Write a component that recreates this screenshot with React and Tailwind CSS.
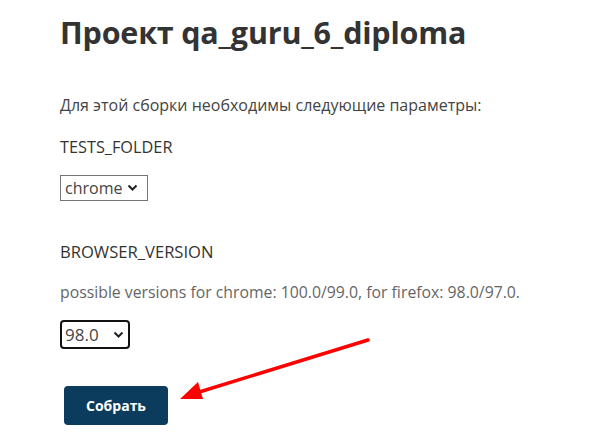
import React from "react";

export default function App() {
  return (
    <div
      className="relative w-[603px] h-[438px] bg-white overflow-hidden text-[#333]"
      style={{ fontFamily: '"Open Sans", "Noto Sans", sans-serif' }}
    >
      <div className="pl-[60px] pt-[12px] flex flex-col items-start">
        <h1 className="text-[30.5px] font-bold leading-[40px] text-[#333] tracking-[-0.2px]">
          Проект qa_guru_6_diploma
        </h1>
        <p className="mt-[42px] text-[16px] leading-[22px] text-[#444]">
          Для этой сборки необходимы следующие параметры:
        </p>
        <div className="mt-[20px] text-[16.3px] leading-[22px] text-[#333]">TESTS_FOLDER</div>
        <div className="mt-[17px] h-[26px] w-[88px] border border-[#767676] flex items-center pl-[4px] text-[16px] text-[#444]">
          <span>chrome</span>
          <svg className="ml-[5px]" width="11" height="8" viewBox="0 0 11 8">
            <path d="M1.5 1.5 L5.5 5.5 L9.5 1.5" stroke="#222" strokeWidth="2" fill="none" />
          </svg>
        </div>
        <div className="mt-[40px] text-[16.6px] leading-[22px] text-[#333]">BROWSER_VERSION</div>
        <p className="mt-[18px] text-[15.8px] leading-[22px] text-[#666]">
          possible versions for chrome: 100.0/99.0, for firefox: 98.0/97.0.
        </p>
        <div className="mt-[17px] h-[29px] w-[70px] border-2 border-[#111] rounded-[4px] flex items-center pl-[3px] text-[17px] text-[#444]">
          <span>98.0</span>
          <svg className="ml-[14px]" width="11" height="8" viewBox="0 0 11 8">
            <path d="M1.5 1.5 L5.5 5.5 L9.5 1.5" stroke="#222" strokeWidth="2" fill="none" />
          </svg>
        </div>
        <button className="mt-[37px] ml-[4px] h-[39px] w-[104px] rounded-[4px] bg-[#0b3c5d] text-white text-[14px] font-bold flex items-center justify-center">
          Собрать
        </button>
      </div>
      <svg className="absolute left-0 top-0" width="603" height="438" viewBox="0 0 603 438">
        <line x1="368" y1="340" x2="196" y2="393" stroke="#ff0000" strokeWidth="3.5" strokeLinecap="round" />
        <polygon points="180,399 198,382 203,399" fill="#ff0000" />
      </svg>
    </div>
  );
}
